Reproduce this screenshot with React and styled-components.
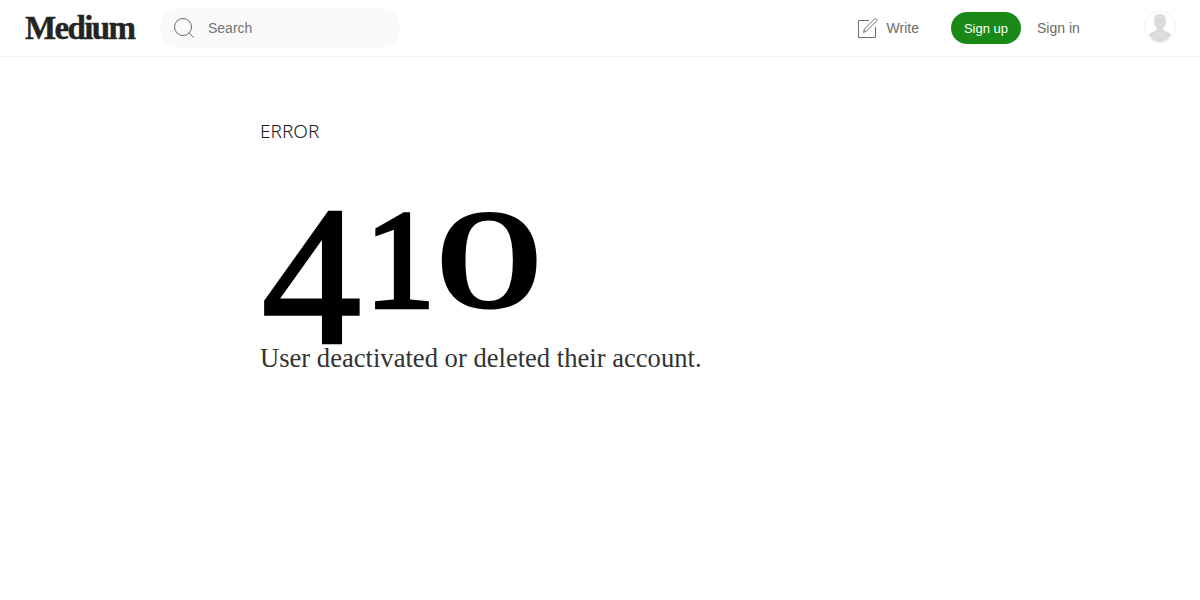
import styled, { createGlobalStyle } from 'styled-components';

const GlobalStyle = createGlobalStyle`
  html, body {
    margin: 0;
    padding: 0;
    background: #fff;
  }
`;

const Page = styled.div`
  width: 1200px;
  height: 600px;
  overflow: hidden;
  background: #fff;
`;

const Header = styled.header`
  display: flex;
  align-items: center;
  height: 56px;
  padding: 0 24px 0 25px;
  border-bottom: 1px solid #f2f2f2;
  font-family: "Liberation Sans", Arial, sans-serif;
`;

const Logo = styled.div`
  width: 111px;
  margin-top: 1px;
  font-family: "Liberation Serif", serif;
  font-size: 33px;
  font-weight: 700;
  letter-spacing: -1.65px;
  color: #242424;
  -webkit-text-stroke: 0.4px #242424;
`;

const SearchBox = styled.div`
  display: flex;
  align-items: center;
  gap: 14px;
  width: 240px;
  height: 40px;
  margin-left: 24px;
  padding-left: 14px;
  box-sizing: border-box;
  border-radius: 20px;
  background: #f9f9f9;
  font-size: 14px;
  color: #757575;
`;

const Actions = styled.div`
  display: flex;
  align-items: center;
  margin-left: auto;
`;

const WriteLink = styled.div`
  display: flex;
  align-items: center;
  gap: 9px;
  margin-right: 32px;
  font-size: 14px;
  color: #6b6b6b;
`;

const SignUp = styled.div`
  display: flex;
  align-items: center;
  justify-content: center;
  width: 70px;
  height: 32px;
  border-radius: 16px;
  background: #1a8917;
  font-size: 13px;
  color: #fff;
`;

const SignIn = styled.div`
  width: 107px;
  margin-left: 16px;
  font-size: 14px;
  color: #6b6b6b;
`;

const Avatar = styled.svg`
  display: block;
  width: 32px;
  height: 32px;
  margin-top: -2px;
`;

const Main = styled.main`
  padding: 62px 0 0 260px;
`;

const Kicker = styled.div`
  font-family: "Noto Sans", sans-serif;
  font-size: 19px;
  font-weight: 300;
  line-height: 24px;
  color: #1a1a1a;
`;

const Code = styled.div`
  height: 148px;
  margin-top: 51px;
  font-family: "Liberation Serif", serif;
  line-height: 164px;
  white-space: nowrap;
  color: #000;
`;

const FourDigit = styled.span`
  display: inline-block;
  margin-left: 2px;
  font-size: 198px;
  -webkit-text-stroke: 3.5px #000;
`;

const OneDigit = styled.span`
  display: inline-block;
  margin-left: 4px;
  font-size: 140px;
  line-height: 90px;
  vertical-align: 35px;
  -webkit-text-stroke: 4.5px #000;
`;

const ZeroDigit = styled.span`
  display: inline-block;
  margin-left: 1px;
  font-size: 140px;
  line-height: 90px;
  vertical-align: 35px;
  -webkit-text-stroke: 3px #000;
  transform: scaleX(1.52);
  transform-origin: left center;
`;

const Message = styled.div`
  font-family: "Liberation Serif", serif;
  font-size: 26.6px;
  line-height: 32px;
  color: #333;
`;

function SearchIcon() {
  return (
    <svg width="20" height="20" viewBox="0 0 20 20" fill="none" stroke="#6b6b6b" strokeWidth="1">
      <circle cx="9" cy="9" r="8.5" />
      <path d="M15 15l4.5 4.5" />
    </svg>
  );
}

function WriteIcon() {
  return (
    <svg width="20" height="20" viewBox="0 0 20 20" fill="none" stroke="#6b6b6b" strokeWidth="1">
      <path d="M11 2.500H.5v17h17V9" />
      <path d="M5.500 14.500l1-3.500L16.500 1c.6-.6 1.400-.6 2 0s.6 1.400 0 2L8.500 13l-3 1.500z" />
    </svg>
  );
}

function AvatarIcon() {
  return (
    <Avatar viewBox="0 0 32 32">
      <circle cx="16" cy="16" r="15.5" fill="#fff" stroke="#f0f0f0" />
      <path
        d="M16 3c3.800 0 6 2.800 6 6.800 0 3-1 5.600-2.800 7.200-.4 1 0 2 1 2.500 2.800 1.300 5.700 2.200 7 4.200C24.400 28.300 20.500 31 16 31S7.600 28.300 4.800 23.700c1.300-2 4.200-2.900 7-4.200 1-.5 1.400-1.500 1-2.500C11 15.400 10 12.800 10 9.800 10 5.800 12.200 3 16 3z"
        fill="#dcdcdc"
      />
    </Avatar>
  );
}

export default function App() {
  return (
    <Page>
      <GlobalStyle />
      <Header>
        <Logo>Medium</Logo>
        <SearchBox>
          <SearchIcon />
          Search
        </SearchBox>
        <Actions>
          <WriteLink>
            <WriteIcon />
            Write
          </WriteLink>
          <SignUp>Sign up</SignUp>
          <SignIn>Sign in</SignIn>
          <AvatarIcon />
        </Actions>
      </Header>
      <Main>
        <Kicker>ERROR</Kicker>
        <Code>
          <FourDigit>4</FourDigit>
          <OneDigit>1</OneDigit>
          <ZeroDigit>0</ZeroDigit>
        </Code>
        <Message>User deactivated or deleted their account.</Message>
      </Main>
    </Page>
  );
}
